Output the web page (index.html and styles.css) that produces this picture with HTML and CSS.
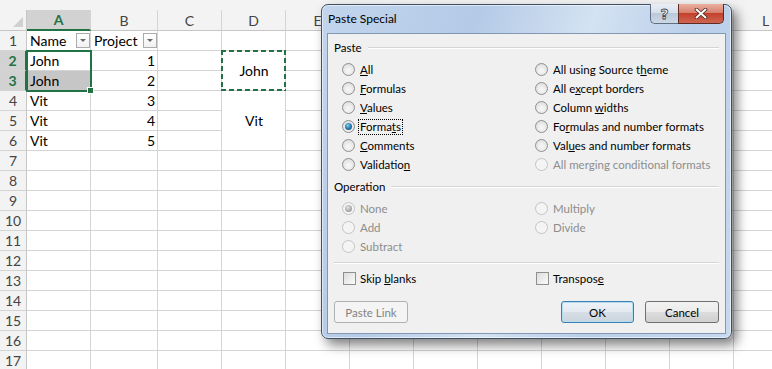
FILE: index.html
```html
<!DOCTYPE html>
<html>
<head>
    <title>Paste Special</title>
    <link rel="stylesheet" href="styles.css">
</head>
<body>
    <div class="formula-edge"></div>
    <table class="sheet">
        <colgroup>
            <col class="w-rowhead">
            <col class="w-col">
            <col class="w-colb">
            <col class="w-col"><col class="w-col"><col class="w-col"><col class="w-col"><col class="w-col">
            <col class="w-col"><col class="w-col"><col class="w-col"><col class="w-col"><col class="w-col">
        </colgroup>
        <tr class="col-heads">
            <th class="corner"><span class="select-all"></span></th>
            <th class="active">A</th><th>B</th><th>C</th><th>D</th><th>E</th><th>F</th>
            <th>G</th><th>H</th><th>I</th><th>J</th><th>K</th><th>L</th>
        </tr>
        <tr>
            <th>1</th>
            <td class="filter">Name<span class="dropdown"></span></td>
            <td class="filter">Project<span class="dropdown"></span></td>
            <td></td><td></td><td></td><td></td><td></td><td></td><td></td><td></td><td></td><td></td>
        </tr>
        <tr>
            <th class="active">2</th>
            <td class="anchor">John<div class="selection"><span class="fill-handle"></span></div></td>
            <td class="num">1</td>
            <td></td>
            <td rowspan="2" class="merged anchor">John<div class="marquee"></div></td>
            <td></td><td></td><td></td><td></td><td></td><td></td><td></td><td></td>
        </tr>
        <tr>
            <th class="active">3</th>
            <td class="shaded">John</td>
            <td class="num">2</td>
            <td></td>
            <td></td><td></td><td></td><td></td><td></td><td></td><td></td><td></td>
        </tr>
        <tr>
            <th>4</th>
            <td>Vit</td>
            <td class="num">3</td>
            <td></td>
            <td rowspan="3" class="merged">Vit</td>
            <td></td><td></td><td></td><td></td><td></td><td></td><td></td><td></td>
        </tr>
        <tr>
            <th>5</th>
            <td>Vit</td>
            <td class="num">4</td>
            <td></td>
            <td></td><td></td><td></td><td></td><td></td><td></td><td></td><td></td>
        </tr>
        <tr>
            <th>6</th>
            <td>Vit</td>
            <td class="num">5</td>
            <td></td>
            <td></td><td></td><td></td><td></td><td></td><td></td><td></td><td></td>
        </tr>
        <tr><th>7</th><td></td><td></td><td></td><td></td><td></td><td></td><td></td><td></td><td></td><td></td><td></td><td></td></tr>
        <tr><th>8</th><td></td><td></td><td></td><td></td><td></td><td></td><td></td><td></td><td></td><td></td><td></td><td></td></tr>
        <tr><th>9</th><td></td><td></td><td></td><td></td><td></td><td></td><td></td><td></td><td></td><td></td><td></td><td></td></tr>
        <tr><th>10</th><td></td><td></td><td></td><td></td><td></td><td></td><td></td><td></td><td></td><td></td><td></td><td></td></tr>
        <tr><th>11</th><td></td><td></td><td></td><td></td><td></td><td></td><td></td><td></td><td></td><td></td><td></td><td></td></tr>
        <tr><th>12</th><td></td><td></td><td></td><td></td><td></td><td></td><td></td><td></td><td></td><td></td><td></td><td></td></tr>
        <tr><th>13</th><td></td><td></td><td></td><td></td><td></td><td></td><td></td><td></td><td></td><td></td><td></td><td></td></tr>
        <tr><th>14</th><td></td><td></td><td></td><td></td><td></td><td></td><td></td><td></td><td></td><td></td><td></td><td></td></tr>
        <tr><th>15</th><td></td><td></td><td></td><td></td><td></td><td></td><td></td><td></td><td></td><td></td><td></td><td></td></tr>
        <tr><th>16</th><td></td><td></td><td></td><td></td><td></td><td></td><td></td><td></td><td></td><td></td><td></td><td></td></tr>
        <tr><th>17</th><td></td><td></td><td></td><td></td><td></td><td></td><td></td><td></td><td></td><td></td><td></td><td></td></tr>
    </table>

    <div class="dialog">
        <div class="titlebar">
            <span class="title">Paste Special</span>
            <div class="caption-buttons">
                <span class="cap-btn help">?</span>
                <span class="cap-btn close">
                    <svg width="14" height="11" viewBox="0 0 14 11">
                        <path d="M2.5 1.5 L11.5 9.5 M11.5 1.5 L2.5 9.5" stroke="#4a2520" stroke-width="3.6" stroke-linecap="round"/>
                        <path d="M2.5 1.5 L11.5 9.5 M11.5 1.5 L2.5 9.5" stroke="#ffffff" stroke-width="2" stroke-linecap="round"/>
                    </svg>
                </span>
            </div>
        </div>

        <div class="panel">
            <div class="group-head"><span>Paste</span><span class="rule"></span></div>
            <div class="options">
                <label class="opt"><span class="radio"></span><span class="text"><u>A</u>ll</span></label>
                <label class="opt"><span class="radio"></span><span class="text">All using Source t<u>h</u>eme</span></label>
                <label class="opt"><span class="radio"></span><span class="text"><u>F</u>ormulas</span></label>
                <label class="opt"><span class="radio"></span><span class="text">All e<u>x</u>cept borders</span></label>
                <label class="opt"><span class="radio"></span><span class="text"><u>V</u>alues</span></label>
                <label class="opt"><span class="radio"></span><span class="text">Column <u>w</u>idths</span></label>
                <label class="opt"><span class="radio checked"></span><span class="text focus">Forma<u>t</u>s</span></label>
                <label class="opt"><span class="radio"></span><span class="text">Fo<u>r</u>mulas and number formats</span></label>
                <label class="opt"><span class="radio"></span><span class="text"><u>C</u>omments</span></label>
                <label class="opt"><span class="radio"></span><span class="text">Val<u>u</u>es and number formats</span></label>
                <label class="opt"><span class="radio"></span><span class="text">Validatio<u>n</u></span></label>
                <label class="opt disabled"><span class="radio"></span><span class="text">All merging conditional formats</span></label>
            </div>

            <div class="group-head op-head"><span>Operation</span><span class="rule"></span></div>
            <div class="options">
                <label class="opt disabled"><span class="radio checked"></span><span class="text">None</span></label>
                <label class="opt disabled"><span class="radio"></span><span class="text">Multiply</span></label>
                <label class="opt disabled"><span class="radio"></span><span class="text">Add</span></label>
                <label class="opt disabled"><span class="radio"></span><span class="text">Divide</span></label>
                <label class="opt disabled"><span class="radio"></span><span class="text">Subtract</span></label>
            </div>

            <div class="separator"></div>
            <div class="options checks">
                <label class="opt"><span class="checkbox"></span><span class="text">Skip <u>b</u>lanks</span></label>
                <label class="opt"><span class="checkbox"></span><span class="text">Transpos<u>e</u></span></label>
            </div>

            <div class="actions">
                <button class="button" disabled>Paste Link</button>
                <span class="spacer"></span>
                <button class="button default">OK</button>
                <button class="button">Cancel</button>
            </div>
        </div>
    </div>
</body>
</html>
```

FILE: styles.css
```css
body {
    margin: 0;
    width: 772px;
    height: 369px;
    overflow: hidden;
    position: relative;
    background: #fff;
    font-family: Lato, "Liberation Sans", sans-serif;
}
.formula-edge {
    height: 10px;
    background: #f3f3f3;
}

/* spreadsheet */
.sheet {
    border-collapse: separate;
    border-spacing: 0;
    table-layout: fixed;
    width: 798px;
    font-size: 14px;
    color: #000;
}
.w-rowhead { width: 27px; }
.w-col { width: 64px; }
.w-colb { width: 67px; }
.sheet th,
.sheet td {
    box-sizing: border-box;
    height: 20px;
    padding: 0 2px 0 3px;
    border-right: 1px solid #d4d4d4;
    border-bottom: 1px solid #d4d4d4;
    line-height: 19px;
    white-space: nowrap;
    vertical-align: bottom;
    text-align: left;
}
.sheet th {
    background: #f3f3f3;
    color: #444;
    font-weight: normal;
    text-align: center;
    padding: 0;
}
.col-heads th {
    height: 21px;
    border-bottom-color: #c6c6c6;
}
.sheet tr th:first-child {
    border-right-color: #c6c6c6;
}
.col-heads th.active {
    background: #d2d2d2;
    color: #217346;
    font-weight: bold;
    border-bottom: 2px solid #217346;
}
.sheet tr th.active:first-child {
    background: #d2d2d2;
    color: #217346;
    font-weight: bold;
    border-right: 2px solid #217346;
}
.corner {
    position: relative;
}
.select-all {
    position: absolute;
    right: 3px;
    bottom: 3px;
    width: 0;
    height: 0;
    border-left: 10px solid transparent;
    border-bottom: 10px solid #d0d0d0;
}
.sheet td.num {
    text-align: right;
}
.sheet td.filter {
    padding-right: 0;
}
.dropdown {
    float: right;
    position: relative;
    box-sizing: border-box;
    width: 14px;
    height: 15px;
    margin-top: 2px;
    border: 1px solid #ababab;
    background: linear-gradient(#ffffff, #f1f1f1);
}
.dropdown::after {
    content: "";
    position: absolute;
    left: 3px;
    top: 5px;
    border-left: 3px solid transparent;
    border-right: 3px solid transparent;
    border-top: 3px solid #6a6a6a;
}
.sheet td.shaded {
    background: #c6c6c6;
}
.sheet td.merged {
    text-align: center;
    vertical-align: middle;
}
.anchor {
    position: relative;
}
.selection {
    position: absolute;
    left: -1px;
    top: -1px;
    width: 66px;
    height: 42px;
    box-sizing: border-box;
    border: 2px solid #217346;
}
.fill-handle {
    position: absolute;
    left: 60px;
    top: 36px;
    width: 5px;
    height: 5px;
    background: #217346;
    box-shadow: 0 0 0 1px #fff;
}
.marquee {
    position: absolute;
    left: -1px;
    top: -1px;
    width: 65px;
    height: 41px;
    background:
        repeating-linear-gradient(90deg, #217346 0 5px, transparent 5px 8px) top left / 100% 2px no-repeat,
        repeating-linear-gradient(90deg, #217346 0 5px, transparent 5px 8px) bottom left / 100% 2px no-repeat,
        repeating-linear-gradient(180deg, #217346 0 5px, transparent 5px 8px) top left / 2px 100% no-repeat,
        repeating-linear-gradient(180deg, #217346 0 5px, transparent 5px 8px) top right / 2px 100% no-repeat;
}

/* dialog window */
.dialog {
    position: absolute;
    left: 321px;
    top: 4px;
    width: 411px;
    height: 335px;
    box-sizing: border-box;
    display: flex;
    flex-direction: column;
    padding: 0 5px 4px;
    border: 1px solid #3f4f64;
    border-radius: 7px;
    background: linear-gradient(110deg, #c2d5ed 0%, #b4cae6 30%, #d4e2f2 52%, #bacfea 72%, #c7d9ee 100%);
    box-shadow: inset 0 0 0 1px rgba(255,255,255,0.55), 5px 6px 12px rgba(0,0,0,0.5);
    font-size: 11.5px;
    color: #000;
}
.titlebar {
    height: 28px;
    display: flex;
    align-items: flex-start;
    justify-content: space-between;
}
.title {
    padding: 6px 0 0 1px;
    font-size: 12px;
    line-height: 16px;
}
.caption-buttons {
    display: flex;
    flex-shrink: 0;
    margin: -1px 2px 0 0;
}
.cap-btn {
    flex-shrink: 0;
    box-sizing: border-box;
    height: 20px;
    display: flex;
    align-items: center;
    justify-content: center;
    border: 1px solid #5f6f84;
    border-top: none;
}
.help {
    width: 28px;
    border-right: none;
    border-radius: 0 0 0 5px;
    background: linear-gradient(#e9eff6, #d4dde9 50%, #bcc9d9 50%, #cdd8e5);
    color: #eef2f6;
    font: bold 14px "DejaVu Sans", sans-serif;
    -webkit-text-stroke: 0.8px #3d4754;
}
.close {
    width: 46px;
    border-color: #5e2b24;
    border-radius: 0 0 5px 0;
    background: linear-gradient(#eab0a2, #d7826f 45%, #c3412c 50%, #cf6650 100%);
}
.panel {
    flex: 1;
    display: flex;
    flex-direction: column;
    padding: 6px 6px 0;
    border: 1px solid #8197b3;
    background: #f0f0f0;
}
.group-head {
    display: flex;
    align-items: center;
    height: 16px;
    line-height: 16px;
}
.rule {
    flex: 1;
    margin-left: 6px;
    border-top: 1px solid #d5d5d5;
    border-bottom: 1px solid #fff;
}
.op-head {
    margin-top: 5px;
}
.options {
    display: grid;
    grid-template-columns: 193px 1fr;
    grid-auto-rows: 19px;
    margin: 4px 0 0 8px;
}
.opt {
    display: flex;
    align-items: center;
}
.opt .text {
    padding: 0 1px;
    line-height: 14px;
}
.opt .text.focus {
    outline: 1px dotted #000;
}
.opt.disabled {
    color: #8d8d8d;
}
.radio {
    box-sizing: border-box;
    width: 13px;
    height: 13px;
    margin-right: 4px;
    border-radius: 50%;
    border: 1px solid #8e8f8f;
    background: radial-gradient(circle at 50% 60%, #f4f4f4 20%, #d6d6d6 100%);
    position: relative;
}
.radio.checked::after {
    content: "";
    position: absolute;
    left: 2px;
    top: 2px;
    width: 7px;
    height: 7px;
    border-radius: 50%;
    background: radial-gradient(circle at 40% 35%, #8fd0ef 0%, #2a82b5 45%, #0f3e5c 100%);
}
.disabled .radio {
    border-color: #c4c4c4;
    background: #f4f4f4;
}
.disabled .radio.checked::after {
    background: radial-gradient(circle at 40% 35%, #e4e4e4 0%, #a8a8a8 60%, #8a8a8a 100%);
}
.separator {
    margin: 6px 0 0;
    border-top: 1px solid #d5d5d5;
    border-bottom: 1px solid #fff;
}
.checks {
    margin-top: 5px;
}
.checkbox {
    box-sizing: border-box;
    width: 13px;
    height: 13px;
    margin: 0 3px 0 1px;
    border: 1px solid #8e8f8f;
    background: linear-gradient(135deg, #dcdcdc, #fbfbfb);
}
.actions {
    display: flex;
    gap: 11px;
    margin-top: 13px;
}
.spacer {
    flex: 1;
}
.button {
    box-sizing: border-box;
    width: 74px;
    height: 22px;
    padding: 0;
    border: 1px solid #707070;
    border-radius: 3px;
    background: linear-gradient(#f2f2f2, #ebebeb 50%, #dddddd 50%, #cfcfcf);
    font: 11.5px Lato, "Liberation Sans", sans-serif;
    color: #000;
}
.button.default {
    width: 73px;
    border-color: #3c7fb1;
    box-shadow: inset 0 0 0 1px #b5dcf0;
    background: linear-gradient(#eef3f8, #e3e9ef 50%, #d6dee6 50%, #cbd5de);
}
.button:disabled {
    border-color: #adb2b5;
    background: #f4f4f4;
    color: #838383;
}
```
